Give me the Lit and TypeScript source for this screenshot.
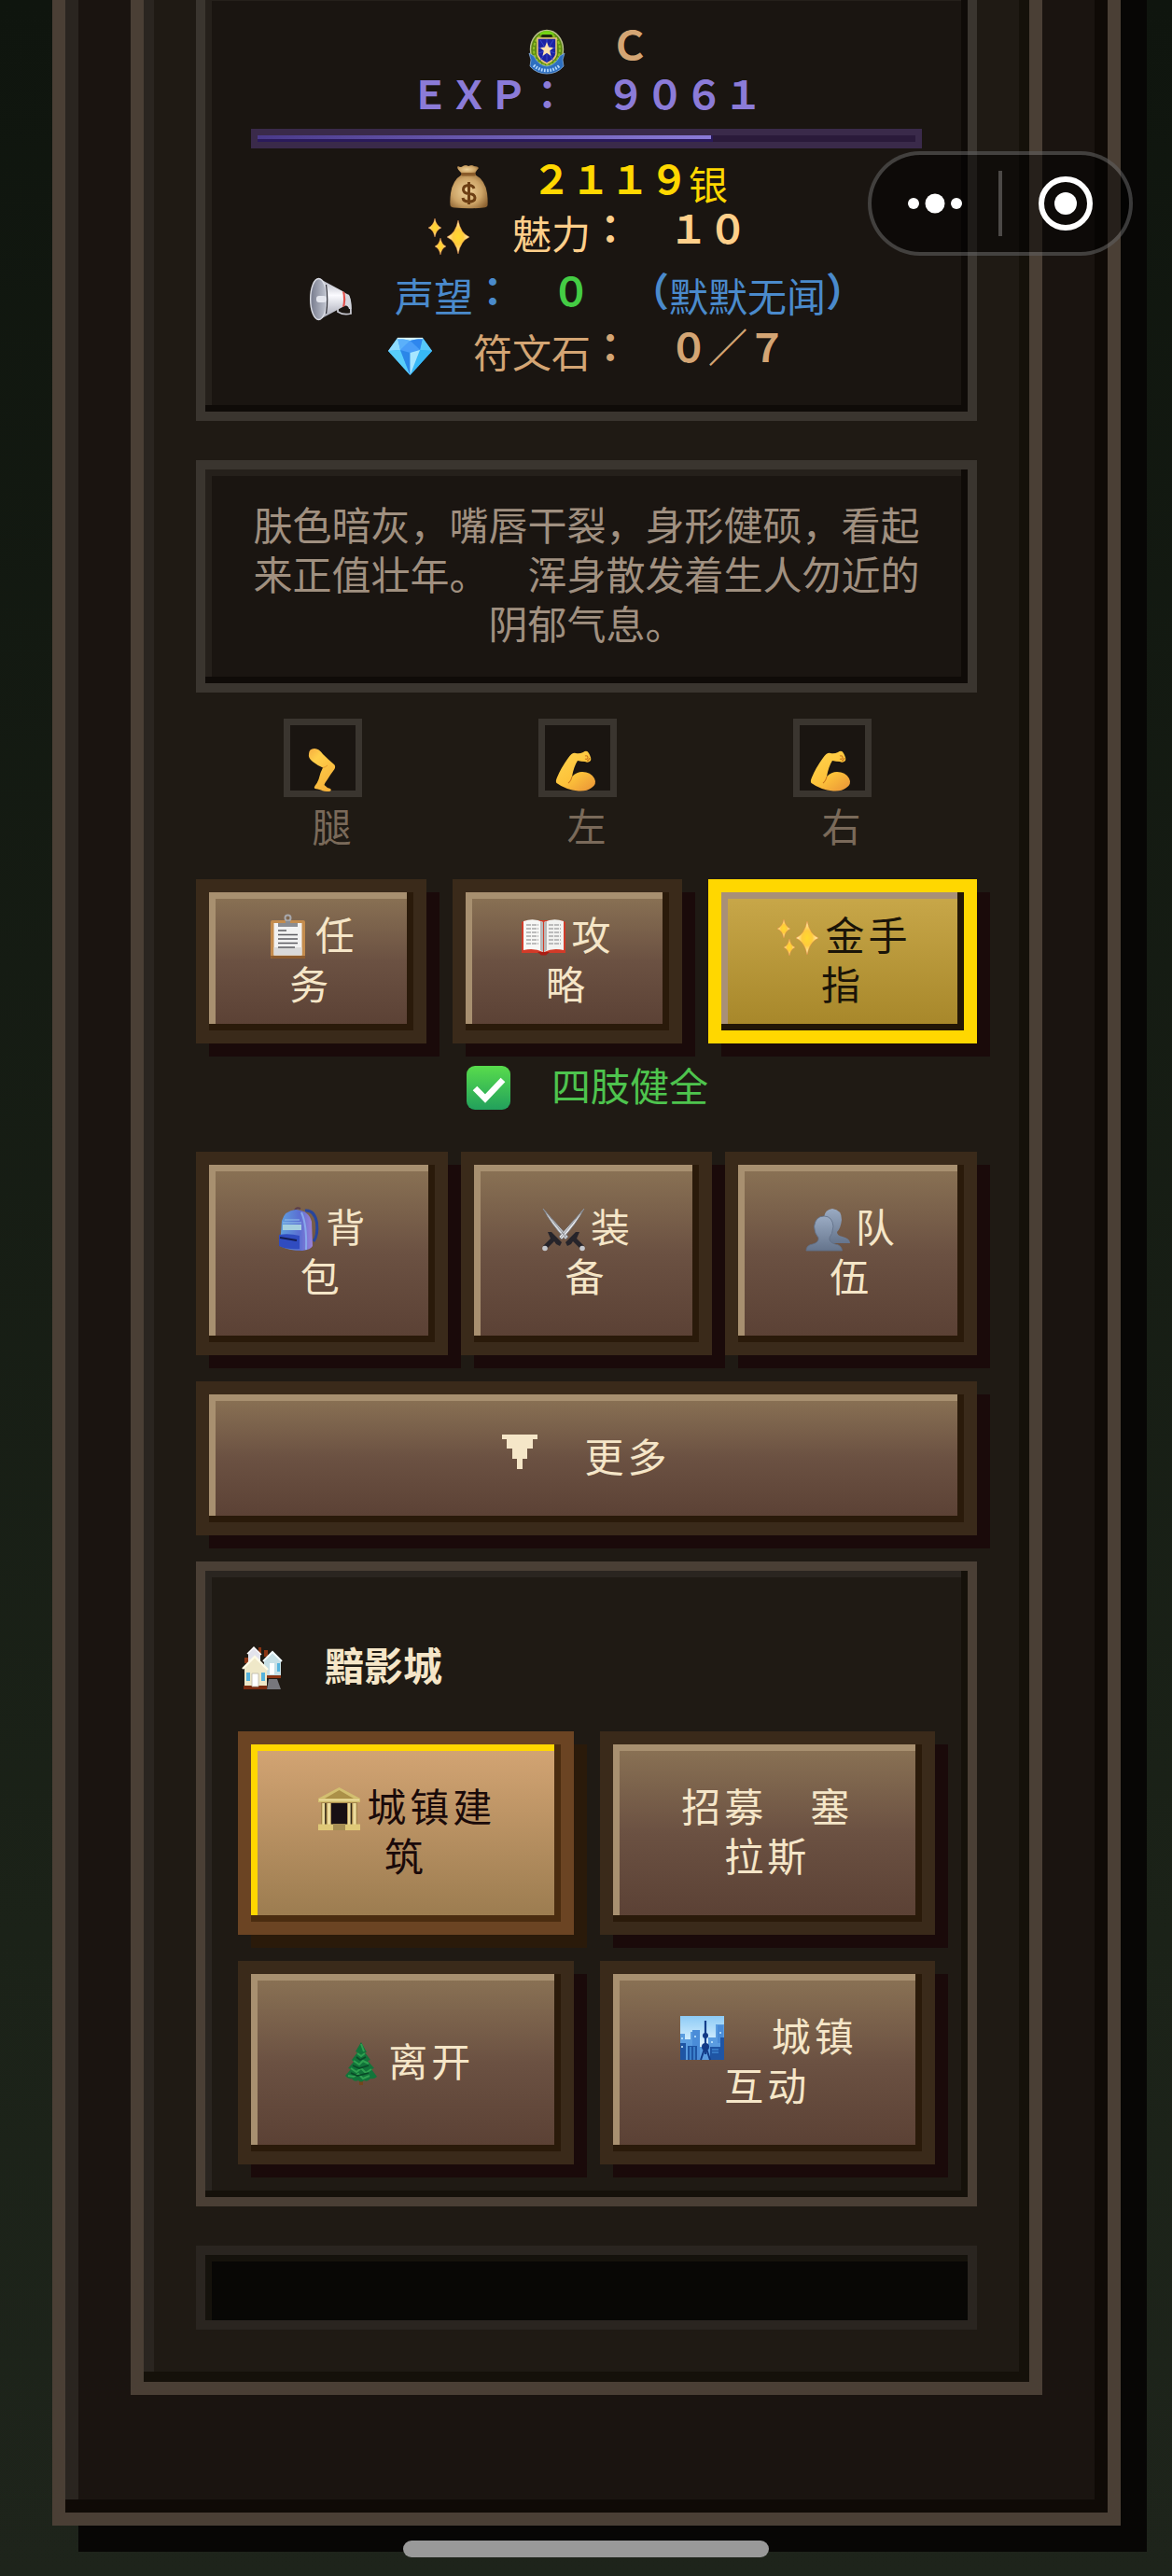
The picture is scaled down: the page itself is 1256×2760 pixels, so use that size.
import { LitElement, html, css, svg } from "lit";
import { customElement, property, state } from "lit/decorators.js";
import { classMap } from "lit/directives/class-map.js";

const star = (cx: number, cy: number, rx: number, ry: number) => svg`
  <path fill="url(#spark)" stroke="#f08a3c" stroke-opacity=".55" stroke-width=".8"
    d="M${cx} ${cy - ry}Q${cx + rx * 0.22} ${cy - ry * 0.22} ${cx + rx} ${cy}Q${cx + rx * 0.22} ${cy + ry * 0.22} ${cx} ${cy + ry}Q${cx - rx * 0.22} ${cy + ry * 0.22} ${cx - rx} ${cy}Q${cx - rx * 0.22} ${cy - ry * 0.22} ${cx} ${cy - ry}Z"/>`;

const icons: Record<string, unknown> = {
  badge: svg`
    <ellipse cx="25" cy="22" rx="17.5" ry="20.5" fill="#5d8a12" stroke="#b9c08a" stroke-width="1.4"/>
    <ellipse cx="25" cy="22" rx="14" ry="17" fill="none" stroke="#8fc022" stroke-width="2" stroke-dasharray="3 1.4"/>
    <path d="M17 5Q25-1 33 5L30 8H20Z" fill="#72d414"/>
    <rect x="19" y="6" width="12" height="3" rx="1.5" fill="#20280c"/>
    <path d="M6 26L11 29Q16 39 25 40Q34 39 39 29L44 26L42 33L43 40Q36 48 25 48Q14 48 7 40L8 33Z" fill="#2d6fc0" stroke="#86abd6" stroke-width=".8"/>
    <path d="M15 10H35V27Q34 33 25 37Q16 33 15 27Z" fill="#1c22a4" stroke="#e6c37c" stroke-width="1.6"/>
    <path d="M25 11V36M16 20L34 26M34 20L16 26M18 12L32 34M32 12L18 34" stroke="#3d4fd2" stroke-width=".8"/>
    <path d="M25 14L27.1 19.6L32 20L28.200 23.400L29.600 29L25 25.800L20.400 29L21.800 23.400L18 20L22.900 19.600Z" fill="#ffe2ad"/>
    <path d="M11 39Q17 44.500 25 44.500Q33 44.500 39 39" fill="none" stroke="#b9dcff" stroke-width="3.400" stroke-dasharray="1.600 1.500"/>`,
  money: svg`
    <defs><radialGradient id="bag" cx=".45" cy=".5" r=".65"><stop offset="0" stop-color="#efd29a"/><stop offset=".6" stop-color="#cda467"/><stop offset="1" stop-color="#8a6030"/></radialGradient></defs>
    <path d="M18 12Q8 18 6 32Q5 40 5.500 45Q6 47 10 47.500Q25 49 41 47.500Q45 47 45.500 45Q46 40 45 32Q43 18 32 12Z" fill="url(#bag)"/>
    <path d="M18 11Q11 4 14 3Q17 5 19 3Q22 1 25 3Q29 1 31 3Q35 3 36 5Q34 7 32 11Z" fill="url(#bag)"/>
    <rect x="17" y="10" width="16" height="3.500" rx="1.700" fill="#8a5c2a"/>
    <path d="M31 27Q30 23.500 25.500 23.500Q19.500 23.500 19.500 28Q19.500 32 25.500 32.500Q32 33 32 37Q32 41 25.500 41Q19.500 41 19 37M25.500 20V44" fill="none" stroke="#6d3f14" stroke-width="3"/>`,
  sparkles: svg`
    <defs><radialGradient id="spark"><stop offset="0" stop-color="#ffd92e"/><stop offset=".45" stop-color="#ffcb3c"/><stop offset="1" stop-color="#fff0c8"/></radialGradient></defs>
    ${star(10, 16, 7, 10)}${star(35, 26, 12, 18)}${star(16, 36, 6, 9)}`,
  horn: svg`
    <defs><linearGradient id="horn" x2="0" y2="1"><stop stop-color="#b5b7c2"/><stop offset=".4" stop-color="#fbfbff"/><stop offset="1" stop-color="#a5a7b4"/></linearGradient>
    <linearGradient id="hornIn"><stop stop-color="#767a8c"/><stop offset="1" stop-color="#c3c7d2"/></linearGradient></defs>
    <path d="M32 34V39Q38 43 46 41Q46 28 43 21" fill="none" stroke="#c8c8d0" stroke-width="1.800"/>
    <path d="M38 18L44 21Q47 27 46.500 36H44Q43 31 38 33Z" fill="#d3d5dd"/>
    <path d="M15 5L39 18Q41 26 39 33L15 46Z" fill="url(#horn)"/>
    <path d="M37 17L39.500 18.500Q41 26 39.500 33L37 34Q39 26 37 17Z" fill="#e2504c"/>
    <ellipse cx="11.500" cy="25.500" rx="8.800" ry="22" fill="url(#hornIn)" stroke="#dcdee6" stroke-width="1.400"/>
    <path d="M19.500 10Q22 26 19.500 41" fill="none" stroke="#2c2c34" stroke-width="1.200"/>
    <rect x="9" y="22" width="11" height="7" rx="3" fill="#e4e6ee"/>`,
  gem: svg`
    <path d="M12 7H39L49 21L25.500 47L2 21Z" fill="#3fa9f5"/>
    <path d="M12 7L15 20L2 21Z" fill="#8fdcff"/><path d="M39 7L36 20L49 21Z" fill="#56c8fb"/>
    <path d="M12 7H39L25.500 10Z" fill="#c5efff"/><path d="M15 20L12 7L25.500 10Z" fill="#5bb0fa"/>
    <path d="M25.500 10L39 7L36 20Z" fill="#2f86ee"/><path d="M15 20L25.500 10L36 20L25.500 23Z" fill="#4a9df8"/>
    <path d="M2 21L15 20L25.500 47Z" fill="#58cdfb"/><path d="M36 20L49 21L25.500 47Z" fill="#37b9f6"/>
    <path d="M15 20L25.500 23V47Z" fill="#2b86e8"/><path d="M36 20L25.500 23V47Z" fill="#a6e6ff"/>
    <path d="M12 7.500H39" stroke="#e0f7ff" stroke-width="1.400"/>`,
  leg: svg`
    <defs><linearGradient id="skin" x2=".6" y2="1"><stop stop-color="#f5ac40"/><stop offset=".3" stop-color="#ffcf4a"/><stop offset="1" stop-color="#f6b23a"/></linearGradient></defs>
    <path d="M11 9Q11 3 17 3Q22 3 26 9Q32 15 38 20Q40 22 38.500 25Q34 31 31 36Q28 40 27.500 42Q30 45 34 46Q36 48 33 49Q27 49 24 47.500Q20 46 17.500 46Q16 45 17.500 43Q20 40 21.500 36Q23 29 26 23.500Q20 21 15 17Q10 13 11 9Z" fill="url(#skin)"/>
    <path d="M26 23.500Q29 23 31 21" fill="none" stroke="#e69a2c" stroke-width="1"/>`,
  arm: svg`
    <defs><linearGradient id="skin2" x2=".7" y2="1"><stop stop-color="#ffd54f"/><stop offset=".65" stop-color="#fdc23a"/><stop offset="1" stop-color="#ee9f38"/></linearGradient></defs>
    <path d="M24 8Q28 9 32 7Q36 4 38 8Q41 13 40 16Q37 19 34 17Q30 17 26 16Q22 22 20 33Q25 28 31 28Q40 28 44 35Q47 41 41 45Q36 49 27 48.500Q13 47 3.500 40Q2 38 4 34Q8 24 16 13Q20 7 24 8Z" fill="url(#skin2)"/>
    <path d="M34 11Q37 10 37 13Q36 15 34 14M36 16Q38 16 39 13M20 33Q19 38 16 40" fill="none" stroke="#c9761c" stroke-width="1.100"/>`,
  task: svg`
    <rect x="7" y="7" width="37" height="41" rx="2" fill="#c48c4e"/><path d="M7 45H44V48H9Q7 48 7 45Z" fill="#8d5c2e"/>
    <rect x="10.500" y="10" width="30" height="34.500" fill="#f2f2f2"/><path d="M10.500 36H40.500V44.500H10.500Z" fill="#dadada"/>
    <circle cx="25.500" cy="4.500" r="3" fill="none" stroke="#a8a8ac" stroke-width="2"/>
    <path d="M23 8H28V10H36V14H15V10H23Z" fill="#8b8d92"/>
    <path d="M15 18H24M15 22.500H36M15 27H36M15 31.500H36M15 36H33" stroke="#5c5c62" stroke-width="1.700"/>`,
  guide: svg`
    <path d="M2 9L6 7H45L49 9V42H2Z" fill="#d23a28"/><path d="M19 41H32L28 44.500H23Z" fill="#a81e14"/>
    <path d="M4 8Q15 4 25 9V41Q15 36 4 39Z" fill="#f7f7f5"/><path d="M47 8Q36 4 26 9V41Q36 36 47 39Z" fill="#f2f2f0"/>
    <path d="M22 8V39L25 41V9ZM29 8V39L26 41V9Z" fill="#b9b9b9"/>
    <path d="M7 12H20M7 16H20M7 20H20M7 24H20M7 28H20M7 32H20M31 12H44M31 16H44M31 20H44M31 24H44M31 28H44M31 32H44" stroke="#a9a9a9" stroke-width="1.300" stroke-dasharray="5 1"/>`,
  pack: svg`
    <defs><linearGradient id="pack" x2="1" y2="0"><stop stop-color="#5fa0dd"/><stop offset=".6" stop-color="#5a6ed2"/><stop offset="1" stop-color="#9c82d8"/></linearGradient></defs>
    <path d="M33 5Q43 4 45.500 18Q47 32 42 38" fill="none" stroke="#27459c" stroke-width="3"/>
    <path d="M22 5Q23 1 28 3" fill="none" stroke="#5a3d4a" stroke-width="2"/>
    <path d="M8 16Q11 5 23 4Q37 5 40 17L41 43Q39 47 30 48Q15 48 6 43Z" fill="url(#pack)"/>
    <path d="M29 7Q35 20 34 47" fill="none" stroke="#88a9ec" stroke-width="2"/>
    <path d="M9 20H29V26H9Z" fill="#a5cfdf"/><path d="M11 15H27M9 18H29" stroke="#96c1ec" stroke-width="1.200"/>
    <path d="M5 31Q15 29 27 32V46Q14 47 5 43Z" fill="#304cc0"/><path d="M6 34L24 37" stroke="#141c50" stroke-width="2"/>`,
  swords: svg`
    <path d="M4 3L31 33L28 36Q12 19 4 3Z" fill="#d5d8dc" stroke="#6d6e74" stroke-width=".8"/>
    <path d="M48 3L21 33L24 36Q40 19 48 3Z" fill="#e4e6ea" stroke="#6d6e74" stroke-width=".8"/>
    <path d="M4 3L29 34M48 3L23 34" stroke="#8f9298" stroke-width="1"/>
    <path d="M9 28L13 28L24 39L22 43L18 41L16 38L8 46L4 43L12 35Z" fill="#26242a"/>
    <path d="M43 28L39 28L28 39L30 43L34 41L36 38L44 46L48 43L40 35Z" fill="#26242a"/>
    <circle cx="6" cy="45.500" r="2.800" fill="#c5c7cc"/><circle cx="46" cy="45.500" r="2.800" fill="#c5c7cc"/>`,
  team: svg`
    <defs><linearGradient id="team" x2="0" y2="1"><stop stop-color="#9aabc3"/><stop offset="1" stop-color="#65748c"/></linearGradient></defs>
    <path d="M30 3Q40 4 40 15Q39 24 35 28Q35 32 41 33Q49 35 49 40H28L21 12Q22 4 30 3Z" fill="url(#team)"/>
    <path d="M21 11Q30 11 31 22Q30 31 27 34Q26 39 33 41Q40 42 40.500 48H2Q2 42 9 41Q16 39 15 34Q11 30 10.500 22Q12 11 21 11Z" fill="url(#team)" stroke="#5f6e86" stroke-width=".8"/>`,
  check: svg`
    <defs><linearGradient id="ok" x2="0" y2="1"><stop stop-color="#58dc4c"/><stop offset="1" stop-color="#22a05c"/></linearGradient></defs>
    <rect x="2" y="1" width="47" height="47" rx="9" fill="url(#ok)"/><path d="M11 25L22 36L41 16" fill="none" stroke="#fff" stroke-width="6.500"/>`,
  houses: svg`
    <path d="M22 3H25V10H22ZM28 6H32V13H28ZM7 14H12V20H7Z" fill="#8a3514"/>
    <path d="M11 9L17 3L24 10V20H11Z" fill="#e3e3ec"/><path d="M10 10L17 3L25 11" fill="none" stroke="#fff" stroke-width="1.400"/>
    <path d="M28 17L37 8L46 17V35H28Z" fill="#c7e0e6"/><path d="M27 18L37 8L47 18" fill="none" stroke="#f2fafc" stroke-width="2"/>
    <path d="M34 20H39V32H34Z" fill="#fff"/><path d="M42 20H45V29H42Z" fill="#55b3dd"/>
    <path d="M30 33H46V36H30Z" fill="#8a3514"/><path d="M33 37H42L46 48H31Z" fill="#77777c"/>
    <path d="M7 24L18 14L31 25V46H7Z" fill="#efe8c8"/><path d="M5 26L18 13L32 27" fill="none" stroke="#fffbe6" stroke-width="2.400"/>
    <path d="M6 44H31V48H6Z" fill="#7a2c10"/><path d="M15 31H22V45H15Z" fill="#fff" stroke="#b9b4a4" stroke-width=".8"/>
    <path d="M9 30H13V39H9ZM25 30H29V39H25Z" fill="#55b3dd"/>`,
  bank: svg`
    <path d="M6 17H45V43H6Z" fill="#a4854a"/><path d="M17 19H34V43H17Z" fill="#181014"/>
    <path d="M3 14L25.500 2L48 14V18H3Z" fill="#d3bf70"/><path d="M10 14L25.500 5L41 14Z" fill="#ab9048"/>
    <path d="M4 15.500H47" stroke="#f0dfa0" stroke-width="1.500"/>
    <path d="M9 19V42M14.500 19V42M36.500 19V42M42 19V42" stroke="#ecdc9c" stroke-width="3.400"/>
    <path d="M10.800 19V42M38.300 19V42" stroke="#282012" stroke-width="1.300"/>
    <path d="M3 41.500H48V48H3Z" fill="#dfc978"/><path d="M19 41H32V48H19Z" fill="#a68e54"/>`,
  tree: svg`
    <path d="M24 42H28V48H24Z" fill="#74441c"/>
    <path d="M26 2L32 13L30 13L36 21L33 22L40 30L37 31L43 39Q40 42 36 41Q33 45 29 43Q26 46 23 43Q18 45 16 41Q12 42 9 38L15 31L12 30L18 23L16 21L22 13L20 12Z" fill="#12743a"/>
    <path d="M26 4L29 12M22 14L26 17L30 14M18 22L24 26L28 22L34 25M15 30L21 34L26 30L31 35L37 31M12 38L18 39L23 36L28 41L35 38" fill="none" stroke="#2fa050" stroke-width="2"/>
    <path d="M21 18L25 21L31 18M17 27L24 30L34 27M15 35L22 38L34 35" fill="none" stroke="#0a4a28" stroke-width="1.800"/>`,
  city: svg`
    <defs><linearGradient id="sky" x2="0" y2="1"><stop stop-color="#8dcbf6"/><stop offset=".6" stop-color="#d8f0fe"/></linearGradient></defs>
    <path d="M3 1H50V48H3Z" fill="url(#sky)"/><path d="M8 26H14V18H24V34H33V24H41V10H50V48H3V20H8Z" fill="#5a9ce0"/>
    <path d="M16 16H24V48H16ZM43 11H49V30H43Z" fill="#4a8cd8"/>
    <path d="M3 30H9V48H3ZM11 33H21V48H11ZM35 34H46V48H35ZM46 24H50V48H46Z" fill="#1f55a4"/>
    <path d="M14 34V48M18 34V48M37 37H44M37 40H44" stroke="#4d9ce4" stroke-width="1.200"/>
    <path d="M30 6V20M30 20V42" stroke="#143f8c" stroke-width="2.200"/><circle cx="30" cy="22" r="3" fill="#123a86"/>
    <circle cx="30" cy="34" r="4" fill="#123a86"/><path d="M29 36L25 48M31 36L35 48" stroke="#123a86" stroke-width="2"/>
    <path d="M5 24V26M19 22V24M37 28V30M46 18V20M5 33V35" stroke="#c8ecff" stroke-width="1.500"/>`,
  down: svg`<path fill="currentColor" d="M5 -2H43V3H38V13H32V24H27V35H21V24H16V13H10V3H5Z"/>`,
};

@customElement("pixel-icon")
class PixelIcon extends LitElement {
  static styles = css`
    :host { display: inline-block; width: 51px; height: 48px; vertical-align: -9px; line-height: 0; }
    .art { display: block; width: 100%; height: 100%; overflow: visible; }
  `;
  @property() name = "";
  render() {
    return html`<svg class="art" viewBox="0 0 51 48" aria-hidden="true">${icons[this.name]}</svg>`;
  }
}

interface Action { icon?: string; label: string; tone?: "gold" | "primary"; }

@customElement("app-root")
class AppRoot extends LitElement {
  static styles = css`
    :host {
      display: block;
      font-family: "Liberation Sans", "Noto Sans CJK SC", sans-serif;
      font-size: 42px;
      line-height: 53px;
      text-spacing-trim: space-all;
      color: #f5e6c8;
    }
    *, *::before, *::after { box-sizing: border-box; }
    p, h2 { margin: 0; font-size: inherit; }
    .page {
      position: relative;
      min-height: 100vh;
      padding: 0 55px 54px 56px;
      background: linear-gradient(#0f150e, #1b2218 75%, #1e241b);
    }
    .outer {
      border: 14px solid #4a3f35;
      border-top: 0;
      padding: 0 70px 126px;
      background: #1a1410;
      box-shadow: 28px 28px 0 #070605, 28px 0 0 #070605, inset -14px -14px 0 #0f0a06, inset 14px 0 0 #2a2520;
    }
    .inner {
      border: 14px solid #4a3f35;
      border-top: 0;
      padding: 0 56px 56px;
      background: #1f1a14;
      box-shadow: inset -11px -11px 0 #15110a, inset 11px 0 0 #2a2520;
    }
    .panel {
      border: 10px solid #3a352f;
      padding: 35px;
      background: #1a1511;
      box-shadow: inset -7px -7px 0 #0f0b08, inset 7px 7px 0 #25201b;
      text-align: center;
    }
    .stats {
      border-top: 0;
      padding-top: 29px;
      margin-bottom: 42px;
      box-shadow: inset -7px -7px 0 #0f0b08, inset 7px 1px 0 #25201b;
    }
    .wide {
      font-family: "Noto Sans CJK SC", sans-serif;
      font-weight: 700;
      font-variant-east-asian: full-width;
      line-height: 24px;
      vertical-align: 6px;
    }
    .rank, .runes { color: #d4a574; }
    .exp { color: #8b7bd8; }
    .coins { color: #ffd700; }
    .charm { color: #ffcf8a; }
    .fame { color: #4a8acc; margin: 14px 0 7px; }
    .score { color: #44cc44; }
    .bar {
      height: 21px;
      margin: 3px 14px 14px;
      border: 7px solid #3a2a4a;
      background: #2a1a3a;
    }
    .fill {
      height: 100%;
      background: linear-gradient(90deg, #4a3a8a, #8b7bd8);
      box-shadow: inset -2px -3px 0 #2a1a5a;
    }
    .story { color: #a09080; }
    .limbs {
      display: grid;
      grid-template-columns: repeat(3, 1fr);
      padding: 28px 9px;
      text-align: center;
      color: #7a6a5a;
    }
    .limb { display: flex; flex-direction: column; align-items: center; gap: 7px; }
    .slot {
      display: flex;
      align-items: flex-end;
      justify-content: center;
      width: 84px;
      height: 84px;
      margin-right: 20px;
      border: 7px solid #3a352f;
      background: #1a1511;
    }
    .row { display: grid; }
    .quick { grid-template-columns: 6fr 6fr 7fr; gap: 28px; }
    .bags { grid-template-columns: repeat(3, 1fr); gap: 14px; margin-bottom: 28px; }
    .pair { grid-template-columns: 1fr 1fr; gap: 28px; }
    .health { margin: 21px 0 42px; text-align: center; color: #4ec44e; }
    .btn {
      min-width: 0;
      margin: 0;
      padding: 42px 54px;
      border: 14px solid #3a2a1a;
      border-radius: 0;
      background: linear-gradient(#8b7355, #6b5142 50%, #5a4034) padding-box;
      box-shadow: 14px 14px 0 #1a0a0a, inset -7px -7px 0 #2a1a0a, inset 7px 7px 0 #a89070;
      color: #f5e6c8;
      font: inherit;
      letter-spacing: 4px;
      text-align: center;
      cursor: pointer;
    }
    .btn pixel-icon { margin-right: 4px; }
    .quick .btn { padding-block: 21px; }
    .gold {
      border-color: #ffd700;
      background: linear-gradient(#c9a84a, #a68629) padding-box;
      box-shadow: 14px 14px 0 #1a0a0a, inset -7px -7px 0 #221606, inset 7px 7px 0 #a89078;
      color: #1a1408;
    }
    .primary {
      border-color: #6b4423;
      background: linear-gradient(#d4a574, #9a7b4f) padding-box;
      box-shadow: 14px 14px 0 #2a1a0a, inset -7px -7px 0 #4a2c10, inset 7px 7px 0 #ffd700;
      color: #1a0a0a;
    }
    .more {
      display: flex;
      align-items: center;
      justify-content: center;
      width: 100%;
      margin-bottom: 28px;
    }
    .more pixel-icon { margin: 0 -4px 0 -5px; }
    .town {
      border-color: #4a3f35;
      background: #1f1a14;
      box-shadow: inset -7px -7px 0 #15110a, inset 7px 7px 0 #2a2520;
    }
    .place { margin: 42px 0; text-align: left; font-weight: 700; }
    .log {
      height: 90px;
      margin-top: 42px;
      border: 10px solid #2a2520;
      background: #080705;
      box-shadow: inset 7px 7px 0 #15120c;
    }
    .capsule {
      position: absolute;
      top: 162px;
      right: 42px;
      display: flex;
      align-items: center;
      width: 284px;
      height: 112px;
      border: 4px solid rgba(255, 255, 255, 0.22);
      border-radius: 56px;
      background: rgba(0, 0, 0, 0.48);
    }
    .tool {
      flex: 1;
      height: 100%;
      padding: 0;
      border: 0;
      background: none;
      color: #fff;
      cursor: pointer;
    }
    .tool svg { display: block; margin: auto; }
    .rule { width: 4px; height: 70px; background: rgba(255, 255, 255, 0.25); }
    .home {
      position: absolute;
      bottom: 20px;
      left: calc(50% - 196px);
      width: 392px;
      height: 18px;
      border-radius: 9px;
      background: #999;
    }
  `;

  @state() private exp = 9061;
  @state() private expShare = 69.2;

  private quick: Action[] = [
    { icon: "task", label: "任务" },
    { icon: "guide", label: "攻略" },
    { icon: "sparkles", label: "金手指", tone: "gold" },
  ];
  private bags: Action[] = [
    { icon: "pack", label: "背包" },
    { icon: "swords", label: "装备" },
    { icon: "team", label: "队伍" },
  ];
  private town: Action[] = [
    { icon: "bank", label: "城镇建筑", tone: "primary" },
    { label: "招募　塞拉斯" },
    { icon: "tree", label: "离开" },
    { icon: "city", label: "　城镇互动" },
  ];
  private limbs = [
    { icon: "leg", label: "腿" },
    { icon: "arm", label: "左" },
    { icon: "arm", label: "右" },
  ];

  private button(a: Action) {
    return html`<button type="button" class=${classMap({ btn: true, gold: a.tone === "gold", primary: a.tone === "primary" })}>${
      a.icon ? html`<pixel-icon name=${a.icon}></pixel-icon>` : ""}${a.label}</button>`;
  }

  render() {
    return html`
      <div class="page">
        <main class="outer">
          <div class="inner">
            <section class="panel stats">
              <p class="rank"><pixel-icon name="badge"></pixel-icon>　<span class="wide">C</span></p>
              <p class="exp"><span class="wide">EXP: ${this.exp}</span></p>
              <div class="bar" role="progressbar" aria-label="EXP" aria-valuenow=${this.expShare}>
                <div class="fill" style="width:${this.expShare}%"></div>
              </div>
              <p class="coins"><pixel-icon name="money"></pixel-icon>　<span class="wide">2119</span>银</p>
              <p class="charm"><pixel-icon name="sparkles"></pixel-icon>　魅力<span class="wide">: 10</span></p>
              <p class="fame"><pixel-icon name="horn"></pixel-icon>　声望<span class="wide">: </span><span class="wide score">0</span><span class="wide"> (</span>默默无闻<span class="wide">)</span></p>
              <p class="runes"><pixel-icon name="gem"></pixel-icon>　符文石<span class="wide">: 0/7</span></p>
            </section>
            <section class="panel story">肤色暗灰，嘴唇干裂，身形健硕，看起来正值壮年。　浑身散发着生人勿近的阴郁气息。</section>
            <div class="limbs">
              ${this.limbs.map((l) => html`
                <div class="limb"><span class="slot"><pixel-icon name=${l.icon}></pixel-icon></span><span>${l.label}</span></div>`)}
            </div>
            <div class="row quick">${this.quick.map((a) => this.button(a))}</div>
            <p class="health"><pixel-icon name="check"></pixel-icon>　四肢健全</p>
            <div class="row bags">${this.bags.map((a) => this.button(a))}</div>
            <button type="button" class="btn more"><pixel-icon name="down"></pixel-icon><span>　更多</span></button>
            <section class="panel town">
              <h2 class="place"><pixel-icon name="houses"></pixel-icon>　黯影城</h2>
              <div class="row pair">${this.town.map((a) => this.button(a))}</div>
            </section>
            <div class="log" role="log"></div>
          </div>
        </main>
        <div class="capsule">
          <button type="button" class="tool" aria-label="菜单">
            <svg width="60" height="60" viewBox="0 0 60 60" fill="currentColor"><circle cx="7" cy="30" r="6"/><circle cx="30" cy="30" r="10.500"/><circle cx="53" cy="30" r="6"/></svg>
          </button>
          <span class="rule"></span>
          <button type="button" class="tool" aria-label="关闭">
            <svg width="60" height="60" viewBox="0 0 60 60" fill="currentColor"><circle cx="30" cy="30" r="26" fill="none" stroke="currentColor" stroke-width="6"/><circle cx="30" cy="30" r="12"/></svg>
          </button>
        </div>
        <div class="home"></div>
      </div>`;
  }
}
